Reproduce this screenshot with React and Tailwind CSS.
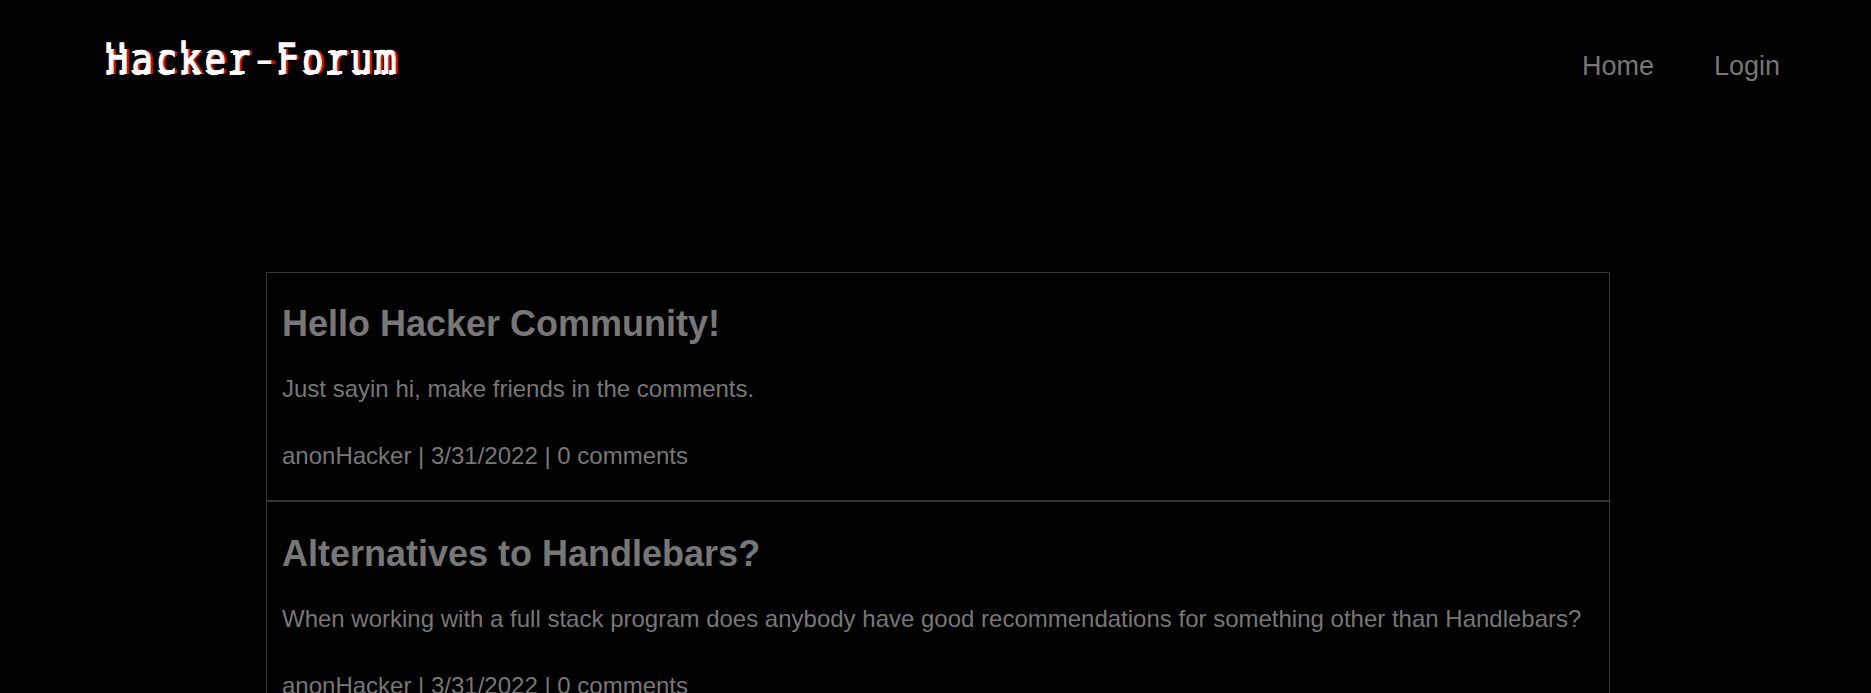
const posts = [
  { title: 'Hello Hacker Community!', body: 'Just sayin hi, make friends in the comments.' },
  {
    title: 'Alternatives to Handlebars?',
    body: 'When working with a full stack program does anybody have good recommendations for something other than Handlebars?',
  },
];

// An "r" with slab serifs at its head and foot.
function SlabR() {
  return (
    <span className="relative left-[2px] bg-[linear-gradient(white,white),linear-gradient(white,white)] bg-[length:15px_4px,6px_4px] bg-[position:2px_32px,3px_12px] bg-no-repeat font-['Liberation_Mono']">
      r
    </span>
  );
}

function Wordmark() {
  return (
    <>
      Hacke<SlabR />
      <span className="inline-block origin-[40%_50%] scale-x-150 [-webkit-text-stroke:0px]">-</span>
      Fo<SlabR />um
    </>
  );
}

// Three horizontal slices of the wordmark; the outer two are shifted left.
function Logo() {
  return (
    <h1 className="relative left-px h-[48px] w-[352px] origin-top-left scale-x-[0.84] font-['DejaVu_Sans_Mono',monospace] text-[42.6px] leading-[48px] font-normal tracking-[3.4px] whitespace-nowrap text-white [-webkit-text-stroke:1.3px_white]">
      <span className="block [clip-path:inset(14px_-4px_13px_0)] [text-shadow:3px_0_#f00000]"><Wordmark /></span>
      <span aria-hidden="true" className="absolute top-0 -left-[3px] [clip-path:inset(0_0_34px_-4px)]"><Wordmark /></span>
      <span aria-hidden="true" className="absolute top-0 -left-[3px] [clip-path:inset(35px_0_0_-4px)]"><Wordmark /></span>
    </h1>
  );
}

export default function App() {
  return (
    <div className="h-[693px] overflow-hidden bg-black font-['Liberation_Sans',sans-serif] text-[#777]">
      <header className="flex h-[272px] items-start justify-between pt-[35px] pr-[91px] pl-[106px]">
        <Logo />
        <nav className="flex gap-[60px] pt-[15px] text-[27px] leading-[32px]">
          <a>Home</a>
          <a>Login</a>
        </nav>
      </header>
      <main className="ml-[266px] w-[1344px]">
        {posts.map((p) => (
          <article key={p.title} className="h-[229.4px] border border-[#333538] px-[15px] pt-[30.2px] text-[24px] leading-[27px]">
            <h2 className="text-[36px] leading-[41px] font-bold">{p.title}</h2>
            <p className="mt-[31px]">{p.body}</p>
            <p className="mt-[40px]">anonHacker | 3/31/2022 | 0 comments</p>
          </article>
        ))}
      </main>
    </div>
  );
}
